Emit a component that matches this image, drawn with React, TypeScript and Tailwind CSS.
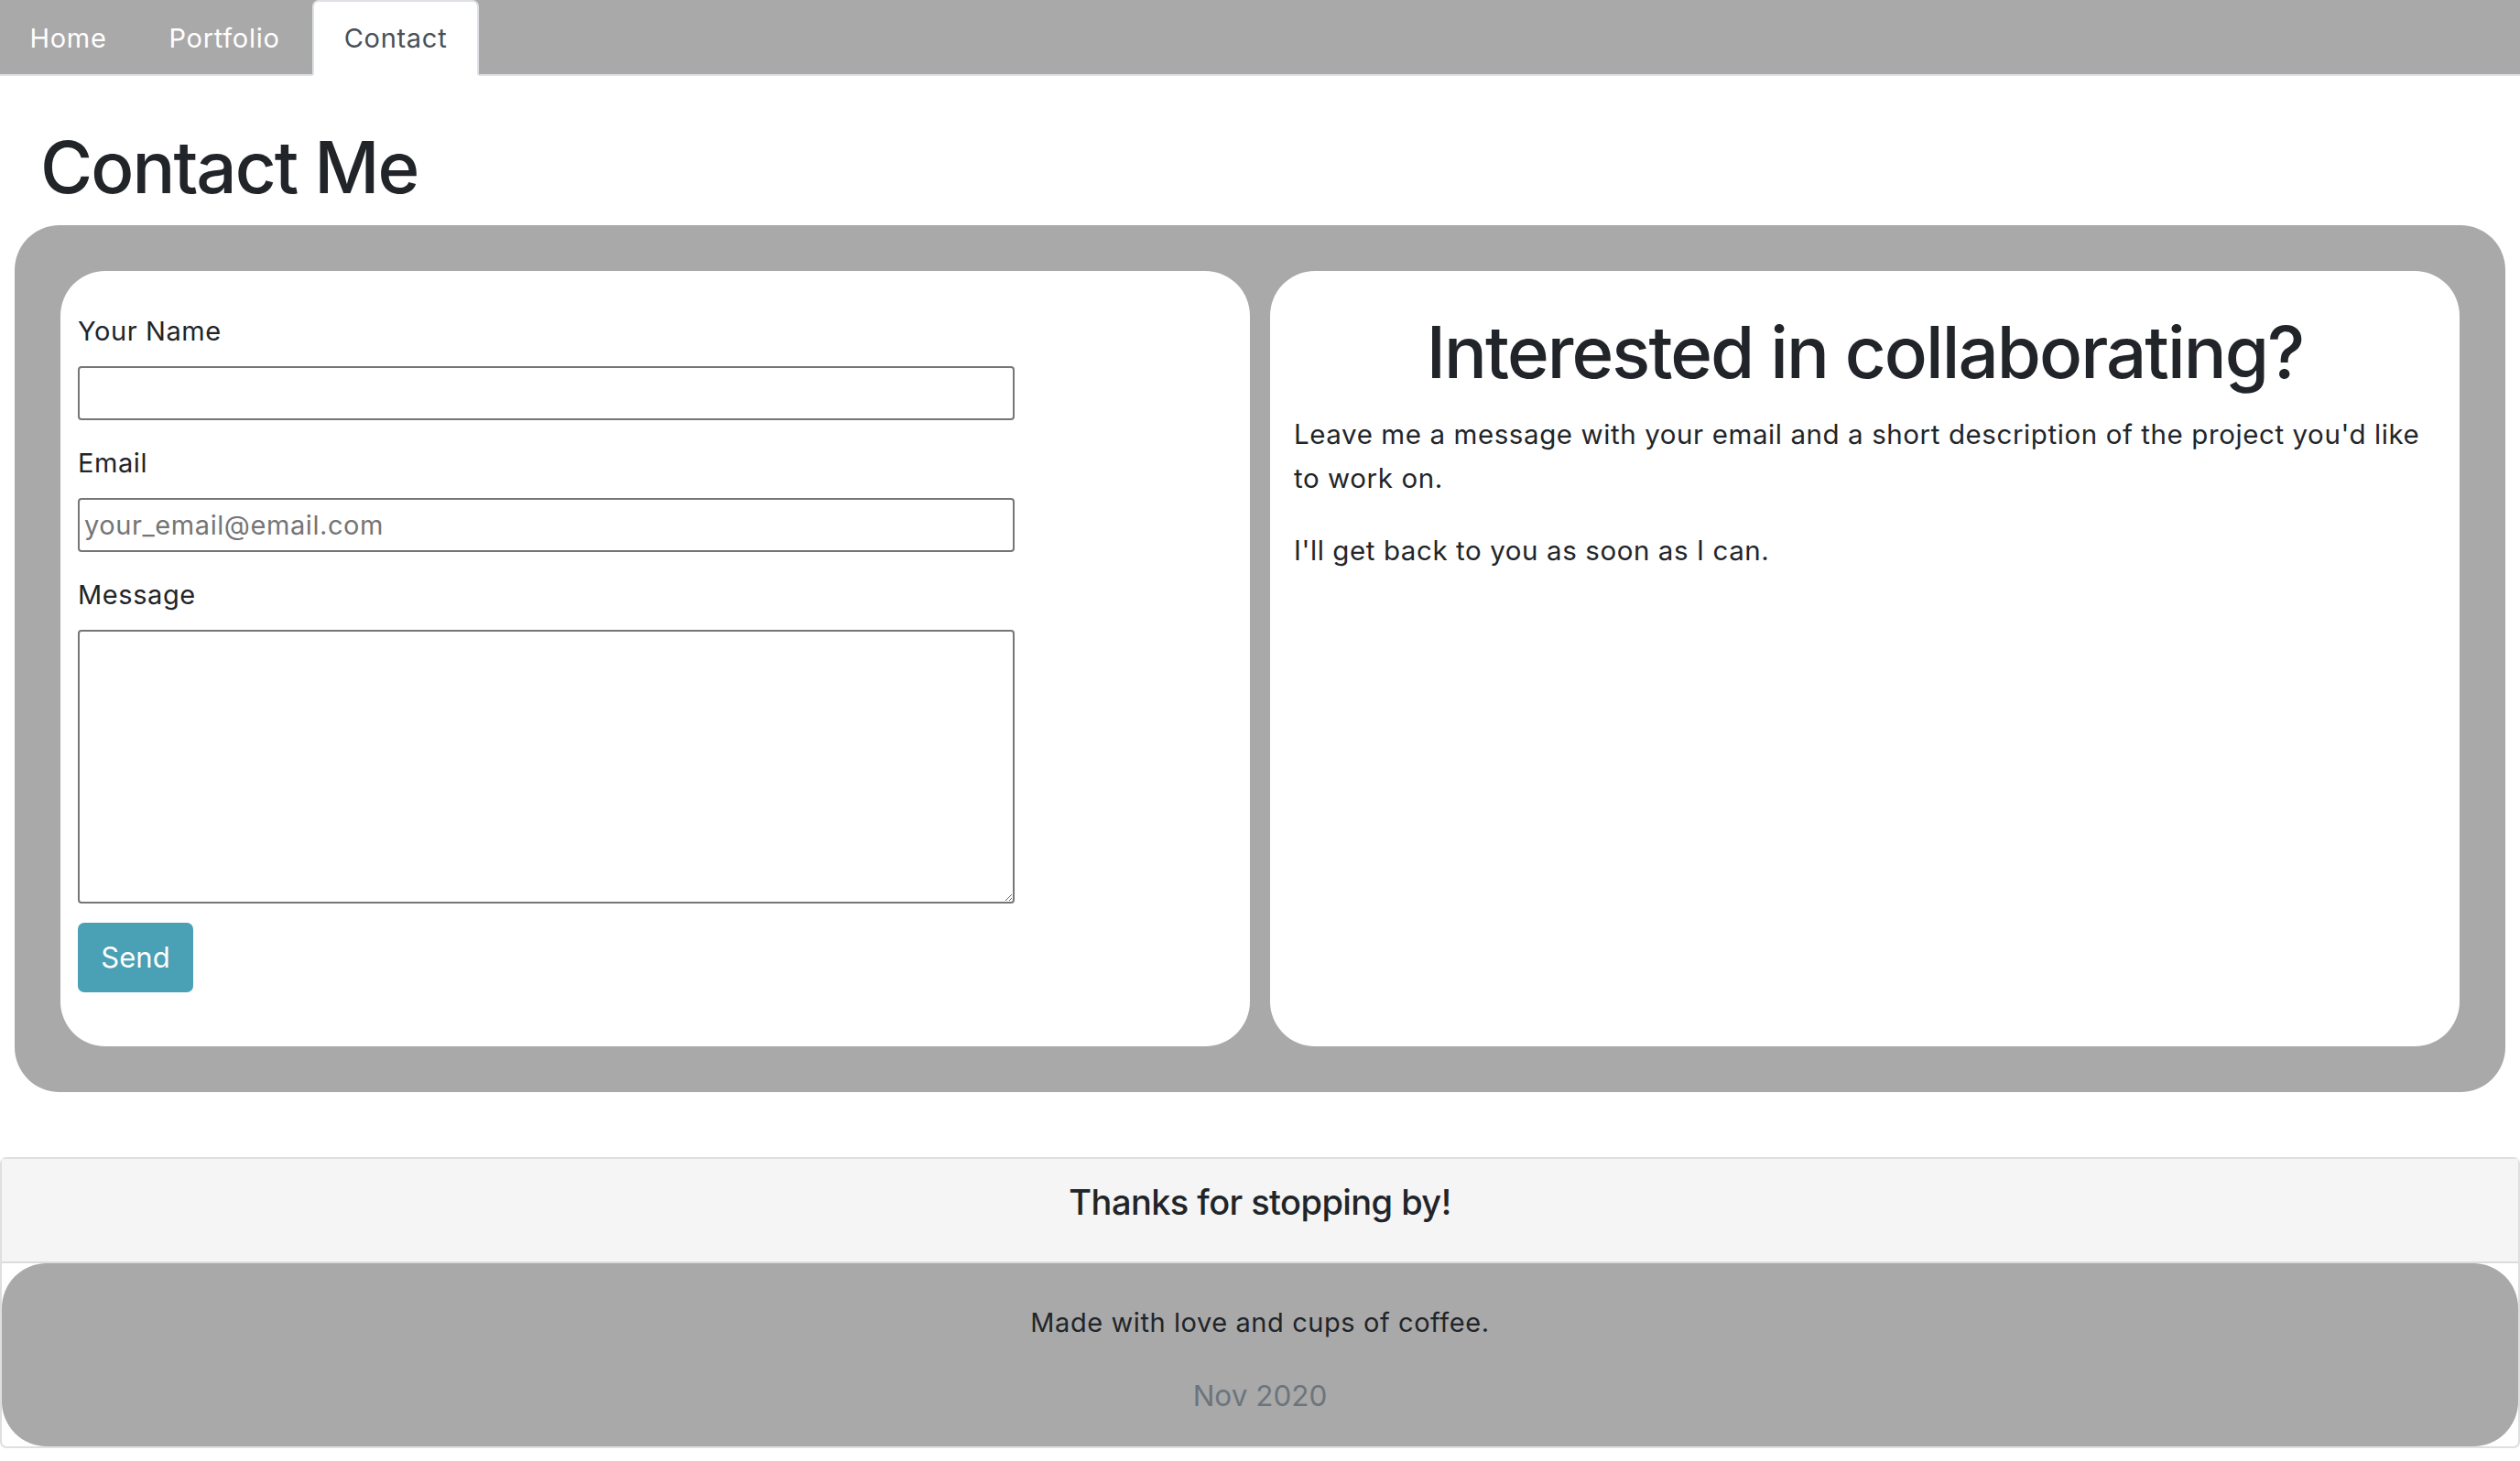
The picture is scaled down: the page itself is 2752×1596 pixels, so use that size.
import React from "react";

const tabs = [
    { label: "Home", width: "w-[149px]" },
    { label: "Portfolio", width: "w-[192px]" },
    { label: "Contact", width: "w-[182px]", active: true },
];

function NavTabs() {
    return (
        <nav className="flex h-[83px] items-end border-b-2 border-[#dee2e6] bg-[#a9a9a9]">
            {tabs.map((tab) =>
                tab.active ? (
                    <a
                        key={tab.label}
                        href="#"
                        className={`${tab.width} -mb-[2px] flex h-[83px] items-center justify-center rounded-t-[7px] border-2 border-[#dee2e6] border-b-white bg-white text-[29px] tracking-[0.025em] text-[#495057]`}
                    >
                        {tab.label}
                    </a>
                ) : (
                    <a
                        key={tab.label}
                        href="#"
                        className={`${tab.width} -mb-[2px] flex h-[83px] items-center justify-center border-2 border-transparent text-[29px] tracking-[0.025em] text-white`}
                    >
                        {tab.label}
                    </a>
                )
            )}
        </nav>
    );
}

function Field({ label, children }: { label: string; children: React.ReactNode }) {
    return (
        <div className="mb-[26px]">
            <label className="mb-[17px] block text-[29px] leading-[42px] tracking-[0.02em]">{label}</label>
            {children}
        </div>
    );
}

function ContactForm() {
    return (
        <form className="rounded-[49px] bg-white px-[19px] pt-[45px] pb-[59px]">
            <Field label="Your Name">
                <input
                    type="text"
                    className="block h-[59px] w-[1023px] rounded-[4px] border-2 border-[#767676] px-[5px] text-[29px] tracking-[0.02em] outline-none"
                />
            </Field>
            <Field label="Email">
                <input
                    type="email"
                    placeholder="your_email@email.com"
                    className="block h-[59px] w-[1023px] rounded-[4px] border-2 border-[#767676] px-[5px] text-[29px] tracking-[0.02em] outline-none placeholder:text-[#757575]"
                />
            </Field>
            <div>
                <label className="mb-[17px] block text-[29px] leading-[42px] tracking-[0.02em]">Message</label>
                <textarea className="block h-[299px] w-[1023px] resize rounded-[4px] border-2 border-[#767676] p-[5px] text-[29px] outline-none" />
            </div>
            <button
                type="button"
                className="mt-[21px] flex h-[76px] w-[126px] items-center justify-center rounded-[7px] bg-[#4aa0b5] text-[31px] text-white"
            >
                Send
            </button>
        </form>
    );
}

export default function App() {
    return (
        <div className="min-h-screen bg-white pb-[14px] font-['Inter',sans-serif] text-[#212529]">
            <NavTabs />

            <main className="px-[16px]">
                <h1 className="mt-[53px] mb-[16px] pl-[28px] text-[78px] leading-[94px] font-medium tracking-[-0.025em]">
                    Contact Me
                </h1>

                <div className="grid grid-cols-2 gap-[22px] rounded-[49px] bg-[#a9a9a9] p-[50px]">
                    <ContactForm />

                    <div className="rounded-[49px] bg-white px-[26px] pt-[42px]">
                        <h1 className="mb-[18px] text-center text-[78px] leading-[94px] font-medium tracking-[-0.025em]">
                            Interested in collaborating?
                        </h1>
                        <p className="mb-[31px] text-[29.5px] leading-[48px] tracking-[0.02em]">
                            Leave me a message with your email and a short description of the project you'd like to work on.
                        </p>
                        <p className="text-[29.5px] leading-[48px] tracking-[0.02em]">I'll get back to you as soon as I can.</p>
                    </div>
                </div>
            </main>

            {/* footer card */}
            <footer className="mt-[71px] rounded-[7px] border-2 border-[#dfdfdf] bg-white text-center">
                <div className="h-[114px] border-b-2 border-[#dcdcdc] bg-[#f5f5f5] pt-[23px]">
                    <h4 className="text-[38px] leading-[48px] font-medium tracking-[-0.015em]">Thanks for stopping by!</h4>
                </div>
                <div className="h-[200px] rounded-[49px] bg-[#a9a9a9] pt-[44px]">
                    <p className="mb-[35px] text-[29px] leading-[42px] tracking-[0.02em]">Made with love and cups of coffee.</p>
                    <p className="text-[31.5px] leading-[47px] text-[#6c757d]">Nov 2020</p>
                </div>
            </footer>
        </div>
    );
}
